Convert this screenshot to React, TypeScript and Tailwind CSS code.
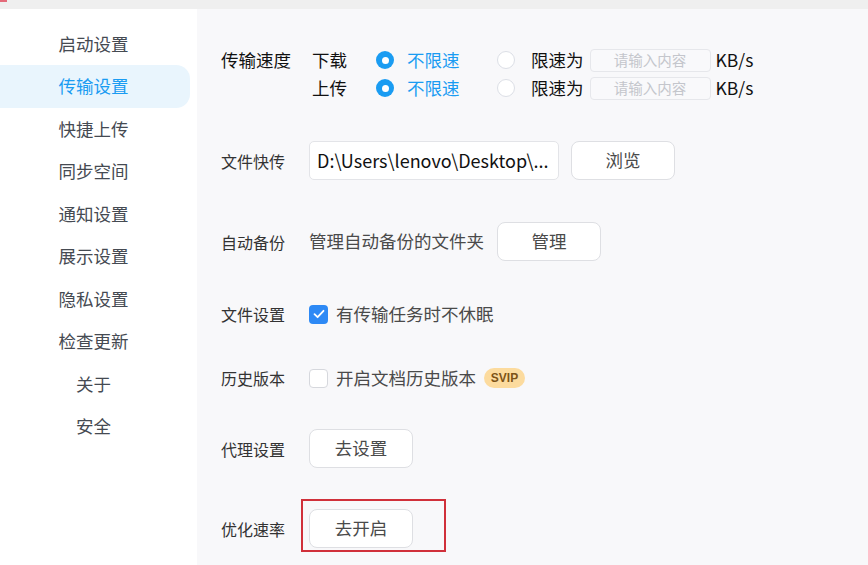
import React from "react";

const font = { fontFamily: '"Noto Sans CJK SC", "Noto Sans", sans-serif' };

function Radio({ checked }: { checked: boolean }) {
  return checked ? (
    <span className="flex h-[18px] w-[18px] items-center justify-center rounded-full bg-[#1a9cf2]">
      <span className="h-[7px] w-[7px] rounded-full bg-white" />
    </span>
  ) : (
    <span className="h-[18px] w-[18px] rounded-full border border-[#dcdfe6] bg-white" />
  );
}

function Checkbox({ checked }: { checked: boolean }) {
  return checked ? (
    <span className="flex h-[19px] w-[19px] items-center justify-center rounded-[4px] bg-[#2d89f5]">
      <svg width="12" height="10" viewBox="0 0 12 10">
        <path d="M1.5 5.2 L4.6 8.2 L10.5 1.8" fill="none" stroke="white" strokeWidth="1.8" strokeLinecap="round" strokeLinejoin="round" />
      </svg>
    </span>
  ) : (
    <span className="h-[19px] w-[19px] rounded-[4px] border border-[#d6d8dd] bg-white" />
  );
}

function Btn({ children, w = 104 }: { children: React.ReactNode; w?: number }) {
  return (
    <div
      className="flex h-[39px] items-center justify-center rounded-[8px] border border-[#dedfe3] bg-white text-[17.5px] text-[#4a4a4a]"
      style={{ width: w }}
    >
      {children}
    </div>
  );
}

const sidebar = ["启动设置", "传输设置", "快捷上传", "同步空间", "通知设置", "展示设置", "隐私设置", "检查更新", "关于", "安全"];

function SpeedRow({ label }: { label: string }) {
  return (
    <div className="flex h-[28px] items-center">
      <span className="w-[55px] text-[17.5px] text-[#111]">{label}</span>
      <span className="ml-[9px]">
        <Radio checked />
      </span>
      <span className="ml-[13px] w-[90px] text-[17.5px] text-[#1a9cf2]">不限速</span>
      <Radio checked={false} />
      <span className="ml-[16px] text-[17.5px] text-[#111]">限速为</span>
      <div className="ml-[6px] flex h-[23px] w-[121px] items-center justify-center rounded-[4px] border border-[#e6e7eb] bg-[#f9f9fb] text-[14.5px] text-[#c4c6cc]">
        请输入内容
      </div>
      <span className="ml-[5px] text-[17.5px] text-[#111]">KB/s</span>
    </div>
  );
}

export default function App() {
  return (
    <div className="flex h-[565px] w-[868px] flex-col overflow-hidden bg-white" style={font}>
      <div className="relative h-[9px] shrink-0 bg-[#efefef]">
        <div className="absolute left-0 top-0 h-[2px] w-[7px] bg-[#e46b7a]" />
      </div>
      <div className="flex flex-1">
        <div className="w-[197px] shrink-0 bg-white pt-[13.75px]">
          {sidebar.map((s, i) => (
            <div
              key={s}
              className={
                "flex h-[42.5px] w-[190px] items-center justify-center rounded-r-[14px] pr-[3px] text-[17.5px] " +
                (i === 1 ? "bg-[#e9f5fd] text-[#1a9cf2]" : "text-[#454a52]")
              }
            >
              {s}
            </div>
          ))}
        </div>
        <div className="flex-1 bg-[#f8f8fa] pl-[24px] pt-[37px]">
          <div className="flex">
            <div className="flex h-[28px] w-[91px] items-center text-[17.5px] text-[#111]">传输速度</div>
            <div className="flex flex-col">
              <SpeedRow label="下载" />
              <SpeedRow label="上传" />
            </div>
          </div>

          <div className="mt-[39px] flex h-[39px] items-center">
            <span className="w-[88px] text-[16px] text-[#333]">文件快传</span>
            <div className="flex h-[39px] w-[250px] items-center rounded-[5px] border border-[#e3e4e8] bg-white pl-[7px] text-[18px] text-[#111]">
              D:\Users\lenovo\Desktop\...
            </div>
            <div className="ml-[12px]">
              <Btn>浏览</Btn>
            </div>
          </div>

          <div className="mt-[42px] flex h-[39px] items-center">
            <span className="w-[88px] text-[16px] text-[#333]">自动备份</span>
            <span className="text-[17.5px] text-[#4a4a4a]">管理自动备份的文件夹</span>
            <div className="ml-[13px]">
              <Btn>管理</Btn>
            </div>
          </div>

          <div className="mt-[33.5px] flex h-[39px] items-center">
            <span className="w-[88px] text-[16px] text-[#333]">文件设置</span>
            <Checkbox checked />
            <span className="ml-[8px] text-[17.5px] text-[#4a4a4a]">有传输任务时不休眠</span>
          </div>

          <div className="mt-[25px] flex h-[39px] items-center">
            <span className="w-[88px] text-[16px] text-[#333]">历史版本</span>
            <Checkbox checked={false} />
            <span className="ml-[8px] text-[17.5px] text-[#4a4a4a]">开启文档历史版本</span>
            <span
              className="ml-[8px] flex h-[20px] w-[41px] items-center justify-center rounded-full bg-[#fcdb9e] text-[12px] font-bold text-[#7d5317]"
              style={{ fontFamily: '"Liberation Sans", Arial, sans-serif' }}
            >
              SVIP
            </span>
          </div>

          <div className="mt-[31.5px] flex h-[39px] items-center">
            <span className="w-[88px] text-[16px] text-[#333]">代理设置</span>
            <Btn>去设置</Btn>
          </div>

          <div className="mt-[41px] flex h-[39px] items-center">
            <span className="w-[88px] text-[16px] text-[#333]">优化速率</span>
            <div className="relative">
              <Btn>去开启</Btn>
              <div className="pointer-events-none absolute left-[-8px] top-[-10px] h-[53px] w-[145px] border-2 border-[#d0303a]" />
            </div>
          </div>
        </div>
      </div>
    </div>
  );
}
